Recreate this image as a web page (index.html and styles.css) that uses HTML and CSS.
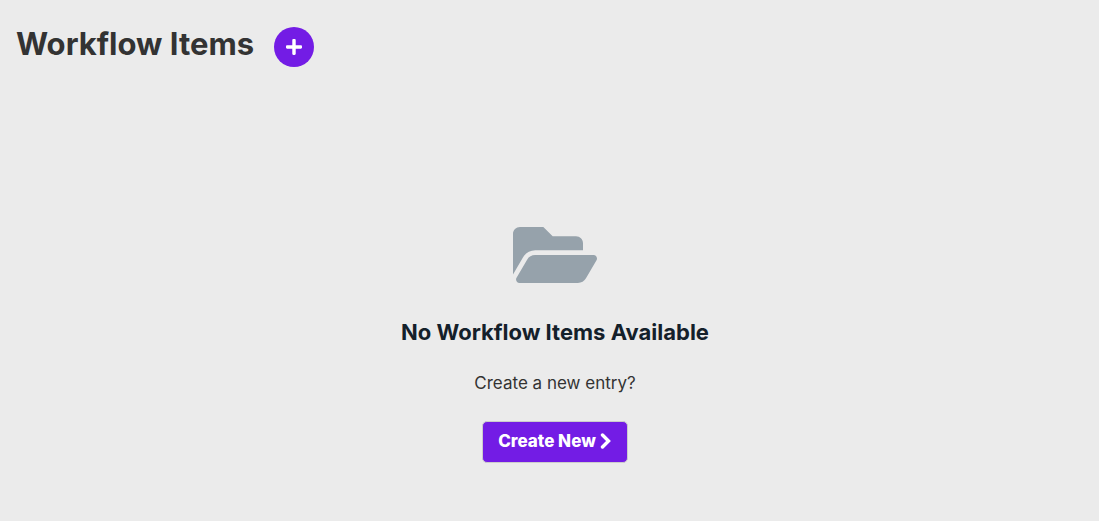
FILE: index.html
```html
<!DOCTYPE html>
<html lang="en">
<head>
<meta charset="utf-8">
<meta name="viewport" content="width=device-width, initial-scale=1">
<title>Workflow Items</title>
<link rel="stylesheet" href="styles.css">
</head>
<body>
<main class="page">
  <header class="page-header">
    <h1 class="page-title">Workflow Items</h1>
    <button class="add-button" type="button" aria-label="Add workflow item">
      <svg class="add-icon" viewBox="0 0 448 448" aria-hidden="true"><path fill="currentColor" d="M416 176H272V32c0-17.670-14.330-32-32-32h-32c-17.670 0-32 14.330-32 32v144H32c-17.670 0-32 14.330-32 32v32c0 17.670 14.330 32 32 32h144v144c0 17.670 14.330 32 32 32h32c17.670 0 32-14.330 32-32V272h144c17.670 0 32-14.330 32-32v-32c0-17.670-14.330-32-32-32z"/></svg>
    </button>
  </header>
  <section class="empty">
    <svg class="empty-icon" viewBox="0 64 576 384" aria-hidden="true"><path fill="currentColor" d="M572.694 292.093L500.27 416.248A63.997 63.997 0 0 1 444.989 448H45.025c-18.523 0-30.064-20.093-20.731-36.093l72.424-124.155A64 64 0 0 1 152 256h399.964c18.523 0 30.064 20.093 20.730 36.093zM152 224h328v-48c0-26.510-21.490-48-48-48H272l-64-64H48C21.490 64 0 85.490 0 112v278.046l69.077-118.418C86.214 242.250 117.989 224 152 224z"/></svg>
    <h2 class="empty-title">No Workflow Items Available</h2>
    <p class="empty-text">Create a new entry?</p>
    <button class="create-button" type="button">Create New
      <svg class="create-icon" viewBox="0 0 12 16" aria-hidden="true"><path fill="none" stroke="currentColor" stroke-width="3.400" stroke-linecap="round" d="M2.500 2l6 6-6 6"/></svg>
    </button>
  </section>
</main>
</body>
</html>
```
FILE: styles.css
```css
* { box-sizing: border-box; }

body {
  margin: 0;
  background: #ebebeb;
  color: #333;
  font-family: Inter, "Liberation Sans", sans-serif;
}

.page { padding: 24px 5px 24px 16px; }

.page-header {
  display: flex;
  align-items: flex-start;
  gap: 20px;
}

.page-title {
  margin: 0;
  font-size: 31px;
  line-height: 40px;
  font-weight: 700;
}

.add-button {
  display: grid;
  place-items: center;
  width: 40px;
  height: 40px;
  margin-top: 3px;
  padding: 0 0 1px;
  border: 0;
  border-radius: 50%;
  background: #731ce5;
  color: #fff;
  cursor: pointer;
}

.add-icon { width: 16px; height: 16px; }

.empty {
  display: flex;
  flex-direction: column;
  align-items: center;
  padding-top: 160px;
  text-align: center;
}

.empty-icon {
  width: 86px;
  height: 56px;
  color: #96a2ab;
}

.empty-title {
  margin: 33px 0 0;
  color: #14202a;
  font-size: 22px;
  line-height: 32px;
  font-weight: 700;
}

.empty-text {
  margin: 23px 0 0;
  font-size: 17px;
  line-height: 24px;
}

.create-button {
  display: flex;
  align-items: center;
  gap: 4px;
  height: 42px;
  margin-top: 26px;
  padding: 0 15px 2px;
  border: 1px solid #ccc;
  border-radius: 5px;
  background: #731ce5;
  color: #fff;
  font: inherit;
  font-size: 17px;
  font-weight: 800;
  cursor: pointer;
}

.create-icon { width: 12px; height: 16px; }
```
